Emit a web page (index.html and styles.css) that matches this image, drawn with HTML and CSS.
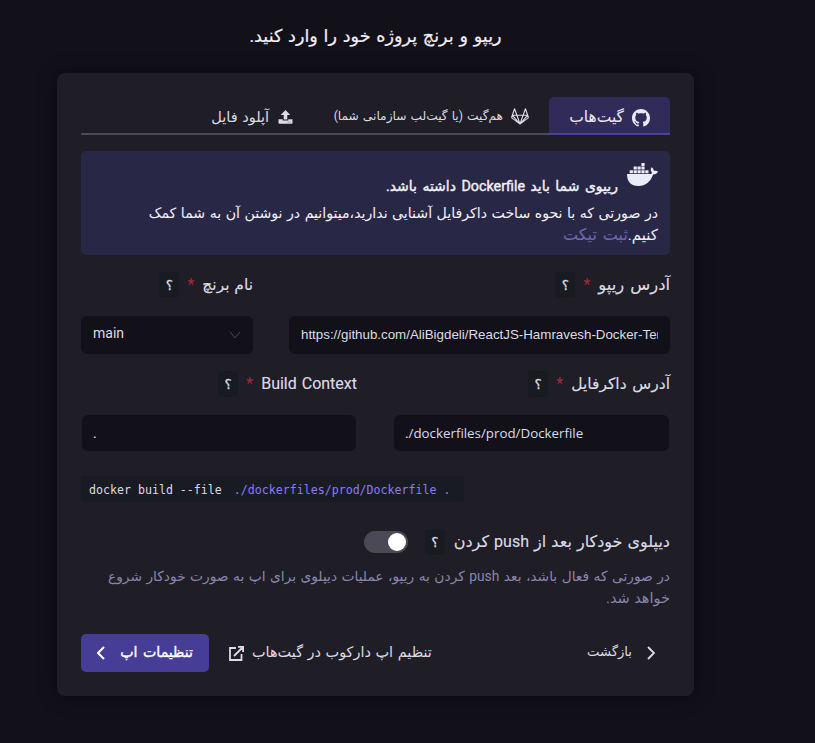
FILE: index.html
```html
<!DOCTYPE html>
<html lang="fa" dir="rtl">
<head>
<meta charset="utf-8">
<title>ریپو و برنچ پروژه</title>
<link rel="stylesheet" href="styles.css">
</head>
<body>
<main class="page">
  <h1 class="title">ریپو و برنچ پروژه خود را وارد کنید.</h1>
  <section class="card">
    <nav class="tabs">
      <a class="tab tab-github active">
        <svg class="ic-github" viewBox="0 0 16 16"><path fill="currentColor" d="M8 0C3.58 0 0 3.58 0 8c0 3.54 2.29 6.53 5.47 7.59.4.07.55-.17.55-.38 0-.19-.01-.82-.01-1.49-2.01.37-2.53-.49-2.69-.94-.09-.23-.48-.94-.82-1.13-.28-.15-.68-.52-.01-.53.63-.01 1.08.58 1.23.82.72 1.21 1.87.87 2.33.66.07-.52.28-.87.51-1.07-1.78-.2-3.64-.89-3.64-3.95 0-.87.31-1.59.82-2.15-.08-.2-.36-1.02.08-2.12 0 0 .67-.21 2.2.82.64-.18 1.32-.27 2-.27s1.36.09 2 .27c1.53-1.04 2.2-.82 2.2-.82.44 1.1.16 1.92.08 2.12.51.56.82 1.27.82 2.15 0 3.07-1.87 3.75-3.65 3.95.29.25.54.73.54 1.48 0 1.07-.01 1.93-.01 2.2 0 .21.15.46.55.38A8.01 8.01 0 0 0 16 8c0-4.42-3.58-8-8-8z"/></svg>
        <span>گیت‌هاب</span>
      </a>
      <a class="tab tab-gitlab">
        <svg class="ic-gitlab" viewBox="0 0 18 17" fill="none" stroke="currentColor" stroke-width="1.1" stroke-linejoin="round"><path d="M3.600.8 1.300 7.200.6 9.600 9 16l8.400-6.400-.7-2.400L14.400.8l-2.300 6.400H5.900zM1.300 7.200h4.600L9 16l3.100-8.800h4.600M1.300 7.200 9 16l7.700-8.800"/></svg>
        <span>هم‌گیت (یا گیت‌لب سازمانی شما)</span>
      </a>
      <a class="tab tab-upload">
        <svg class="ic-upload" viewBox="0 0 14 14"><path fill="currentColor" d="M7 0 2.200 5h3v4.500h3.600V5h3zM0 9.200h4.200v1.400h5.600V9.200H14V13q0 .8-.8.8H.8Q0 13.800 0 13z"/><path stroke="#1f1d26" stroke-width=".5" d="M9.200 12.200h1M11.200 12.200h1"/></svg>
        <span>آپلود فایل</span>
      </a>
    </nav>

    <div class="alert">
      <div class="alert-head">
        <svg class="ic-docker" viewBox="0 0 31 23"><path fill="currentColor" d="M0 11h22.500c1.500 0 2.300-.5 2.700-1.300-1.700-1.500-1.900-3.500-.7-5.400 1.600 1 2.300 2.200 2.400 3.700 1.500-.4 2.900-.2 4.100.6-.9 1.900-2.500 2.800-4.900 2.900C23.500 18.800 18.500 23 11.500 23 4 23 0 18.800 0 11zM2.700 7.200h3.200v3H2.700zM6.600 7.200h3.200v3H6.600zM10.500 7.200h3.200v3h-3.200zM14.400 7.200h3.200v3h-3.200zM18.300 7.200h3.200v3h-3.200zM6.600 3.600h3.200v3H6.600zM10.500 3.600h3.200v3h-3.200zM14.400 3.600h3.200v3h-3.200zM14.400 0h3.200v3h-3.200z"/></svg>
        <strong>ریپوی شما باید <span class="latin">Dockerfile</span> داشته باشد.</strong>
      </div>
      <p class="alert-text">در صورتی که با نحوه ساخت داکرفایل آشنایی ندارید،میتوانیم در نوشتن آن به شما کمک<br><span class="alert-end">کنیم.<a>ثبت تیکت</a></span></p>
    </div>

    <div class="fields fields-repo">
      <div class="field">
        <label class="label"><span class="t-repo">آدرس ریپو</span><i class="star">*</i><b class="help">؟</b></label>
        <div class="input repo" dir="ltr"><span>https://github.com/AliBigdeli/ReactJS-Hamravesh-Docker-Template</span></div>
      </div>
      <div class="field">
        <label class="label"><span class="t-branch">نام برنچ</span><i class="star">*</i><b class="help">؟</b></label>
        <div class="input select" dir="ltr"><span>main</span><svg class="ic-down" viewBox="0 0 12 8"><path d="M1 .8 6 7l5-6.200" fill="none" stroke="currentColor"/></svg></div>
      </div>
    </div>

    <div class="fields fields-file">
      <div class="field">
        <label class="label"><span class="t-file">آدرس داکرفایل</span><i class="star">*</i><b class="help">؟</b></label>
        <div class="input small" dir="ltr"><span>./dockerfiles/prod/Dockerfile</span></div>
      </div>
      <div class="field">
        <label class="label"><span class="t-context">Build Context</span><i class="star">*</i><b class="help">؟</b></label>
        <div class="input small" dir="ltr"><span>.</span></div>
      </div>
    </div>

    <div class="command" dir="ltr"><code>docker build --file</code><code class="args">./dockerfiles/prod/Dockerfile .</code></div>

    <div class="deploy">
      <span class="t-deploy">دیپلوی خودکار بعد از <span class="latin">push</span> کردن</span>
      <b class="help">؟</b>
      <span class="switch"><span class="knob"></span></span>
    </div>
    <p class="desc">در صورتی که فعال باشد، بعد <span class="latin">push</span> کردن به ریپو، عملیات دیپلوی برای اپ به صورت خودکار شروع<br><span class="desc-end">خواهد شد.</span></p>

    <footer class="actions">
      <a class="back"><svg class="ic-chev" viewBox="0 0 8 14"><path d="m1 1 6 6-6 6" fill="none" stroke="currentColor" stroke-width="1.800"/></svg><span>بازگشت</span></a>
      <a class="settings"><span>تنظیم اپ دارکوب در گیت‌هاب</span><svg class="ic-ext" viewBox="0 0 15 15" fill="none" stroke="currentColor" stroke-width="1.800"><path d="M7 2H1v12h11.500V8M9 .9h5.100V6M14 1 5 10"/></svg></a>
      <a class="next"><span>تنظیمات اپ</span><svg class="ic-chev" viewBox="0 0 8 14"><path d="M7 1 1 7l6 6" fill="none" stroke="currentColor" stroke-width="2"/></svg></a>
    </footer>
  </section>
</main>
</body>
</html>
```
FILE: styles.css
```css
* { box-sizing: border-box; }
body {
  margin: 0;
  background: #12111a;
  color: #dcdbe3;
  font: 14px/22px Roboto, "DejaVu Sans", sans-serif;
  word-spacing: 1px;
}
.page { width: 751px; height: 743px; margin-right: auto; padding: 24px 57px 0; }
.title { height: 24px; margin: 0 0 25px; font-size: 17.600px; line-height: 24px; font-weight: 400; text-align: center; color: #f0eff5; white-space: nowrap; word-spacing: 1.400px; -webkit-text-stroke: .2px; }
.card { height: 623px; padding: 24px; background: #1f1d26; border-radius: 8px; box-shadow: 0 0 20px rgba(0, 0, 0, .45); }

.tabs { display: flex; height: 38px; border-bottom: 2px solid #4c4957; }
.tab { display: flex; align-items: center; height: 38px; white-space: nowrap; }
.tab-github { width: 121px; padding-right: 20px; gap: 8px; font-size: 15.500px; border-radius: 5px 5px 0 0; }
.tab-github span { margin-top: 4px; }
.active { background: #302b59; border-bottom: 2px solid #4a41a4; color: #e9e8f6; }
.tab-gitlab { width: 236px; padding-right: 20px; gap: 8px; font-size: 12.200px; }
.tab-upload { padding-right: 20px; gap: 9px; font-size: 14.500px; }
.tab-upload span { margin-top: 3px; }
.ic-github { width: 18px; height: 18px; margin-top: 5px; }
.ic-gitlab { width: 18px; height: 17px; }
.ic-upload { width: 15px; height: 14px; margin-top: 1px; }

.alert { height: 104px; margin-top: 16px; padding: 12px; background: #292746; border-radius: 5px; color: #f2f1f9; }
.alert-head { display: flex; height: 37px; }
.ic-docker { width: 31px; height: 23px; color: #ecebfa; margin-left: 9px; }
.alert-head strong { margin-top: 12px; font-weight: 400; font-size: 14px; -webkit-text-stroke: .4px; white-space: nowrap; word-spacing: 2px; }
.alert-head .latin { font-size: 14.300px; }
.alert-text { margin: 2px 0 0; font-size: 14.130px; white-space: nowrap; }
.alert-end { font-size: 15px; }
.alert-end a { color: #7068b4; font-size: 16px; word-spacing: 2px; }

.fields { display: flex; justify-content: space-between; }
.fields-repo { margin-top: 17px; }
.fields-repo .field:first-child { width: 381px; }
.fields-repo .field:last-child { width: 172px; }
.fields-file { margin-top: 17px; }
.fields-file .field { width: 276px; }
.fields-file .field:first-child { width: 277px; }
.label { display: flex; align-items: center; height: 26px; margin-bottom: 18px; white-space: nowrap; }
.label > span { -webkit-text-stroke: .15px; }
.t-repo { font-size: 16.400px; word-spacing: 2px; }
.t-branch { font-size: 15.500px; }
.t-file { font-size: 15.500px; word-spacing: 2px; }
.t-context { font-size: 16px; }
.star { width: 7px; margin: 0 8px; color: #a32b36; font-style: normal; font-size: 16px; }
.help { width: 20px; height: 26px; border-radius: 4px; background: #191b22; font-size: 13.500px; line-height: 27px; font-weight: 400; text-align: center; -webkit-text-stroke: .3px; }
.input { display: flex; align-items: center; height: 38px; padding: 0 12px; background: #12111a; border-radius: 6px; }
.input span { overflow: hidden; white-space: nowrap; }
.repo { padding-bottom: 2px; font: 13.330px "Liberation Sans", sans-serif; }
.select { justify-content: space-between; padding-bottom: 4px; }
.ic-down { width: 12px; height: 8px; color: #4c4957; margin-top: 4px; }
.small { height: 36px; margin: 0 1px; padding: 0 11px; font-family: "Open Sans", sans-serif; font-size: 13.330px; }

.command { display: flex; width: 383px; height: 26px; margin: 25px auto 0 0; padding: 1px 0 0 8px; gap: 12px; background: #191b22; border-radius: 4px; white-space: pre; word-spacing: 0; }
code { font: 11.620px/27px "DejaVu Sans Mono", monospace; }
.args { color: #897cf5; }

.deploy { display: flex; align-items: center; height: 26px; margin-top: 27px; white-space: nowrap; }
.t-deploy { font-size: 16px; word-spacing: 1.100px; -webkit-text-stroke: .15px; }
.deploy .help { margin: 0 9px 0 17px; }
.deploy .help { margin: 0 9px 0 17px; margin-right: 9px; margin-left: 17px; }
.switch { width: 44px; height: 22px; padding: 2px; border-radius: 11px; background: #4c4957; }
.knob { display: block; width: 18px; height: 18px; border-radius: 50%; background: #fff; }
.desc { height: 44px; margin: 10px 0 0; font-size: 13.800px; color: #8986ae; white-space: nowrap; }
.desc-end { font-size: 14.500px; }

.actions { display: flex; align-items: center; height: 38px; margin-top: 25px; white-space: nowrap; }
.back span, .next span { margin-top: -2px; }
.back { display: flex; align-items: center; gap: 15px; margin-right: 15px; font-size: 13.200px; }
.settings { display: flex; align-items: center; gap: 8px; margin-right: auto; font-size: 14.450px; }
.next { display: flex; align-items: center; width: 128px; height: 38px; margin-right: 20px; padding-right: 16px; gap: 15px; border-radius: 5px; background: #453d96; color: #fff; font-size: 14.200px; word-spacing: 2px; -webkit-text-stroke: .35px; }
.ic-chev { width: 8px; height: 14px; }
.ic-ext { width: 15px; height: 15px; }
```
